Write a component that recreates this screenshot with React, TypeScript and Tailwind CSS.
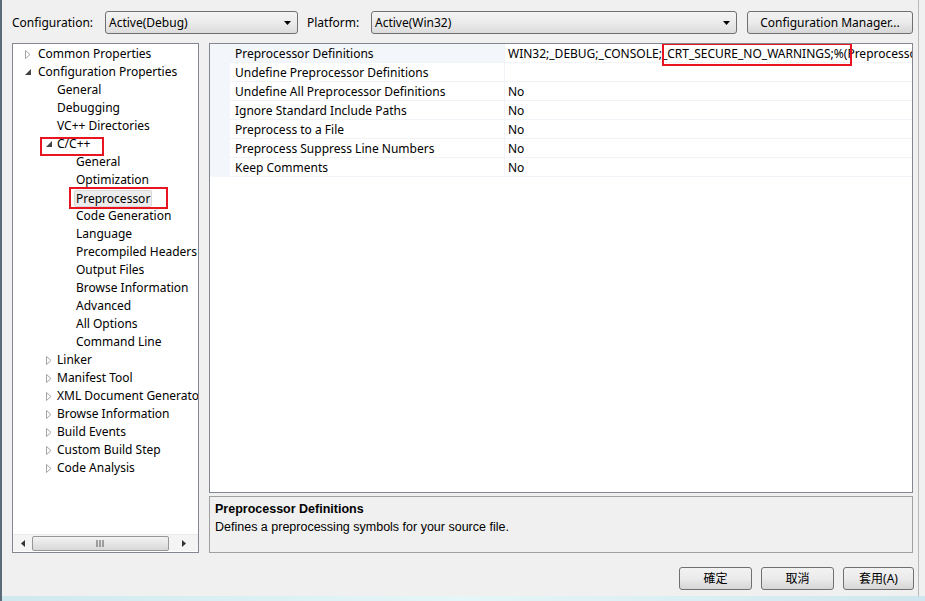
import React from 'react';

const FONT = { fontFamily: '"Noto Sans", "Noto Sans CJK TC", sans-serif' };

type TreeItem = { label: string; level: 0 | 1 | 2; arrow?: 'closed' | 'open'; selected?: boolean };

const TREE: TreeItem[] = [
  { label: 'Common Properties', level: 0, arrow: 'closed' },
  { label: 'Configuration Properties', level: 0, arrow: 'open' },
  { label: 'General', level: 1 },
  { label: 'Debugging', level: 1 },
  { label: 'VC++ Directories', level: 1 },
  { label: 'C/C++', level: 1, arrow: 'open' },
  { label: 'General', level: 2 },
  { label: 'Optimization', level: 2 },
  { label: 'Preprocessor', level: 2, selected: true },
  { label: 'Code Generation', level: 2 },
  { label: 'Language', level: 2 },
  { label: 'Precompiled Headers', level: 2 },
  { label: 'Output Files', level: 2 },
  { label: 'Browse Information', level: 2 },
  { label: 'Advanced', level: 2 },
  { label: 'All Options', level: 2 },
  { label: 'Command Line', level: 2 },
  { label: 'Linker', level: 1, arrow: 'closed' },
  { label: 'Manifest Tool', level: 1, arrow: 'closed' },
  { label: 'XML Document Generator', level: 1, arrow: 'closed' },
  { label: 'Browse Information', level: 1, arrow: 'closed' },
  { label: 'Build Events', level: 1, arrow: 'closed' },
  { label: 'Custom Build Step', level: 1, arrow: 'closed' },
  { label: 'Code Analysis', level: 1, arrow: 'closed' },
];

const PROPS: [string, string][] = [
  ['Preprocessor Definitions', 'WIN32;_DEBUG;_CONSOLE;_CRT_SECURE_NO_WARNINGS;%(PreprocessorDefinitions)'],
  ['Undefine Preprocessor Definitions', ''],
  ['Undefine All Preprocessor Definitions', 'No'],
  ['Ignore Standard Include Paths', 'No'],
  ['Preprocess to a File', 'No'],
  ['Preprocess Suppress Line Numbers', 'No'],
  ['Keep Comments', 'No'],
];

const Arrow = ({ kind }: { kind: 'closed' | 'open' }) =>
  kind === 'closed' ? (
    <svg width="6" height="9" viewBox="0 0 6 9" className="shrink-0">
      <path d="M0.5 0.5 L5 4.5 L0.5 8.5 Z" fill="none" stroke="#a6a6a6" />
    </svg>
  ) : (
    <svg width="6" height="6" viewBox="0 0 6 6" className="shrink-0">
      <path d="M6 0 L6 6 L0 6 Z" fill="#444" />
    </svg>
  );

const DownArrow = () => (
  <svg width="7" height="4" viewBox="0 0 7 4" className="shrink-0">
    <path d="M0 0 L7 0 L3.5 4 Z" fill="#000" />
  </svg>
);

const Combo = ({ value, width }: { value: string; width: string }) => (
  <div
    className={`${width} shrink-0 h-[23px] flex items-center justify-between pl-[3px] pr-[6px] border border-[#707070] rounded-[3px] bg-linear-to-b from-[#f4f4f4] via-[#ebebeb] to-[#dcdcdc] text-[12px] text-black`}
  >
    <span>{value}</span>
    <DownArrow />
  </div>
);

const Button = ({ label, width }: { label: string; width: string }) => (
  <div
    className={`${width} shrink-0 h-[23px] flex items-center justify-center border border-[#707070] rounded-[3px] bg-linear-to-b from-[#f2f2f2] via-[#ebebeb] to-[#d6d6d6] text-[12px] text-black whitespace-nowrap`}
  >
    {label}
  </div>
);

export default function App() {
  return (
    <div
      style={FONT}
      className="relative w-[925px] h-[601px] overflow-hidden bg-[#f0f0f0] border-l-2 border-[#5c6b7a] text-[12px] text-black"
    >
      <div className="flex flex-col h-[596px] border-r border-[#b9b9b9] w-[917px]">
        {/* top row */}
        <div className="flex items-center h-[23px] mt-[11px] pl-[10px]">
          <span className="w-[93px] shrink-0">Configuration:</span>
          <Combo value="Active(Debug)" width="w-[193px]" />
          <span className="ml-[9px] w-[64px] shrink-0">Platform:</span>
          <Combo value="Active(Win32)" width="w-[366px]" />
          <div className="ml-[10px]">
            <Button label="Configuration Manager..." width="w-[166px]" />
          </div>
        </div>

        {/* main area */}
        <div className="flex mt-[9px] pl-[10px] h-[510px]">
          {/* tree */}
          <div className="relative w-[187px] shrink-0 h-full bg-white border border-[#828790] flex flex-col overflow-hidden">
            <div className="flex-1 overflow-hidden">
              {TREE.map((t, i) => {
                const pad = t.level === 0 ? 'pl-[12px]' : t.level === 1 ? 'pl-[33px]' : 'pl-[63px]';
                const slot = t.level === 0 ? 'w-[13px]' : t.level === 1 ? 'w-[11px]' : 'w-0';
                return (
                  <div key={i} className={`h-[18px] pt-[2px] flex items-center whitespace-nowrap ${pad}`}>
                    <span className={`${slot} shrink-0 flex items-center`}>{t.arrow && <Arrow kind={t.arrow} />}</span>
                    <span
                      className={
                        t.selected
                          ? 'shrink-0 px-[1px] -ml-[2px] leading-[15px] bg-[#ececec] border border-[#dadada] rounded-[2px]'
                          : 'shrink-0'
                      }
                    >
                      {t.label}
                    </span>
                  </div>
                );
              })}
            </div>
            {/* horizontal scrollbar */}
            <div className="h-[17px] mb-[1px] flex items-center bg-[#f4f4f4] border-t border-[#eaeaea]">
              <div className="w-[19px] shrink-0 flex justify-center">
                <svg width="4" height="7" viewBox="0 0 4 7">
                  <path d="M4 0 L4 7 L0 3.5 Z" fill="#333" />
                </svg>
              </div>
              <div className="w-[137px] shrink-0 h-[15px] flex items-center justify-center border border-[#979797] rounded-[2px] bg-linear-to-b from-[#f3f3f3] to-[#d8d8d8]">
                <svg width="9" height="7" viewBox="0 0 9 7">
                  <path d="M1 0 V7 M4 0 V7 M7 0 V7" stroke="#555" />
                </svg>
              </div>
              <div className="flex-1 flex justify-center">
                <svg width="4" height="7" viewBox="0 0 4 7">
                  <path d="M0 0 L0 7 L4 3.5 Z" fill="#333" />
                </svg>
              </div>
            </div>
            {/* annotation boxes */}
            <div className="absolute left-[27px] top-[93px] w-[64px] h-[19px] border-2 border-[#e8141f]" />
            <div className="absolute left-[56px] top-[143px] w-[99px] h-[22px] border-2 border-[#e8141f]" />
          </div>

          {/* right column */}
          <div className="ml-[10px] w-[704px] shrink-0 flex flex-col">
            <div className="relative h-[450px] bg-white border border-[#828790] overflow-hidden">
              {PROPS.map(([name, value], i) => (
                <div key={i} className="flex h-[19px] whitespace-nowrap">
                  <div className="w-[20px] shrink-0 bg-[#f3f6fb]" />
                  <div
                    className={`w-[275px] shrink-0 pl-[5px] pt-[2px] flex items-center border-b border-r border-[#f0f3f8] ${
                      i === 0 ? 'bg-[#f3f6fb]' : ''
                    }`}
                  >
                    {name}
                  </div>
                  <div className="flex-1 pl-[3px] pt-[2px] flex items-center border-b border-[#f0f3f8] overflow-hidden">
                    {value}
                  </div>
                </div>
              ))}
              <div className="absolute left-[452px] top-[-1px] w-[190px] h-[23px] border-2 border-[#e8141f]" />
            </div>
            <div
              className="mt-[3px] h-[57px] border border-[#a0a0a0] bg-[#f0f0f0] pl-[5px] pt-[3px] leading-[18px] text-[12.5px]"
              style={{ fontFamily: '"Liberation Sans", "Noto Sans CJK TC", sans-serif' }}
            >
              <div className="font-bold">Preprocessor Definitions</div>
              <div>Defines a preprocessing symbols for your source file.</div>
            </div>
          </div>
        </div>

        {/* buttons */}
        <div className="flex justify-end gap-[9px] mt-[14px] pr-[4px]">
          <Button label="確定" width="w-[73px]" />
          <Button label="取消" width="w-[73px]" />
          <Button label="套用(A)" width="w-[71px]" />
        </div>
      </div>
      <div className="h-[5px] bg-linear-to-r from-[#cfe9ef] via-[#e6f6f8] to-[#cfe6ee]" />
    </div>
  );
}
